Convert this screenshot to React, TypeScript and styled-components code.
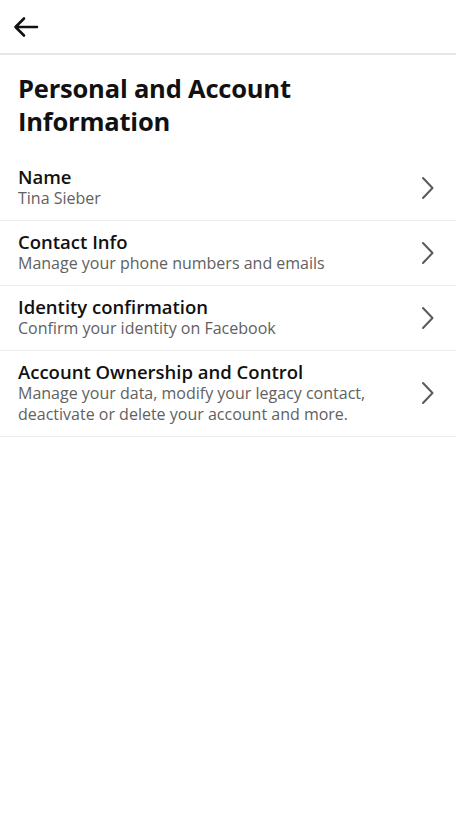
import React from "react";
import styled, { createGlobalStyle } from "styled-components";

const Global = createGlobalStyle`
  html, body { margin: 0; padding: 0; background: #ffffff; }
  body { font-family: "Open Sans", "Noto Sans", sans-serif; color: #111111; -webkit-font-smoothing: antialiased; }
  * { box-sizing: border-box; }
`;

const Page = styled.div`
  width: 456px;
  min-height: 830px;
  background: #ffffff;
  display: flex;
  flex-direction: column;
`;

const Header = styled.header`
  height: 55px;
  display: flex;
  align-items: center;
  padding-left: 13px;
  border-bottom: 2px solid #e6e6e6;
`;

const BackButton = styled.button`
  border: 0;
  background: transparent;
  padding: 0;
  width: 26px;
  height: 26px;
  display: flex;
  align-items: center;
  justify-content: center;
  cursor: pointer;
  margin-top: 1px;
`;

const Title = styled.h1`
  margin: 0;
  padding: 17px 18px 18px;
  font-size: 25.5px;
  line-height: 33px;
  font-weight: 700;
  letter-spacing: -0.2px;
  color: #111111;
`;

const List = styled.ul`
  list-style: none;
  margin: 0;
  padding: 0;
`;

const Row = styled.li`
  display: flex;
  align-items: center;
  padding: 10px 20px 11px 18px;
  border-bottom: 1px solid #ececec;
  cursor: pointer;
`;

const RowText = styled.div`
  flex: 1;
  display: flex;
  flex-direction: column;
`;

const RowTitle = styled.div`
  font-size: 18.5px;
  line-height: 22px;
  font-weight: 600;
  color: #111111;
`;

const RowSub = styled.div`
  font-size: 16px;
  line-height: 21px;
  color: #616161;
`;

const Chevron = () => (
  <svg width="16" height="24" viewBox="0 0 16 24" fill="none">
    <path d="M3 2 L12.5 12 L3 22" stroke="#5a5a5a" strokeWidth="2" strokeLinecap="round" strokeLinejoin="round" />
  </svg>
);

const ArrowLeft = () => (
  <svg width="26" height="22" viewBox="0 0 26 22" fill="none">
    <path d="M24 11 H3 M11 2.5 L2.5 11 L11 19.5" stroke="#111111" strokeWidth="2.6" strokeLinecap="round" strokeLinejoin="round" />
  </svg>
);

const items = [
  { title: "Name", sub: ["Tina Sieber"] },
  { title: "Contact Info", sub: ["Manage your phone numbers and emails"] },
  { title: "Identity confirmation", sub: ["Confirm your identity on Facebook"] },
  {
    title: "Account Ownership and Control",
    sub: ["Manage your data, modify your legacy contact,", "deactivate or delete your account and more."],
  },
];

export default function App() {
  return (
    <Page>
      <Global />
      <Header>
        <BackButton aria-label="Back">
          <ArrowLeft />
        </BackButton>
      </Header>
      <Title>
        Personal and Account
        <br />
        Information
      </Title>
      <List>
        {items.map((it) => (
          <Row key={it.title}>
            <RowText>
              <RowTitle>{it.title}</RowTitle>
              <RowSub>
                {it.sub.map((s, i) => (
                  <React.Fragment key={i}>
                    {i > 0 && <br />}
                    {s}
                  </React.Fragment>
                ))}
              </RowSub>
            </RowText>
            <Chevron />
          </Row>
        ))}
      </List>
    </Page>
  );
}
